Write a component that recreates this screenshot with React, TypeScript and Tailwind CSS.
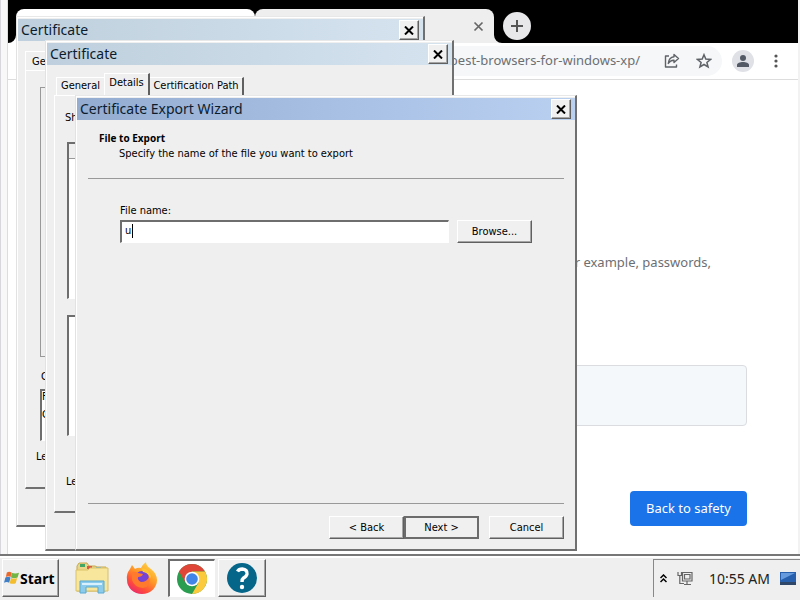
import React from "react";

const raised = "border border-t-white border-l-white border-r-[#606060] border-b-[#606060] shadow-[inset_-1px_-1px_0_#a5a5a5]";
const sunken = "border-t-2 border-l-2 border-t-[#6e6e6e] border-l-[#6e6e6e] border-b border-r border-b-white border-r-white";
const tahoma = "font-['DejaVu_Sans_Condensed','DejaVu_Sans',sans-serif] text-[11px] leading-4";

function CloseButton() {
  return (
    <button aria-label="Close" className={`flex h-5 w-5 items-center justify-center bg-[#f0f0f0] ${raised}`}>
      <svg width="10" height="9" viewBox="0 0 10 9" stroke="#000" strokeWidth="2">
        <path d="M1 0.5 9 8.5M9 0.5 1 8.5" />
      </svg>
    </button>
  );
}

function Window({ title, place, bar, children }: { title: string; place: string; bar: string; children: React.ReactNode }) {
  return (
    <section aria-label={title} className={`absolute flex flex-col overflow-hidden border-l border-t border-r-2 border-b-2 border-l-[#e2e2e2] border-t-[#e8e8e8] border-r-[#707070] border-b-[#707070] bg-[#efefef] ${place}`}>
      <div className="flex grow flex-col border-l border-t border-white">
        <header className={`mt-px flex h-[22px] shrink-0 items-center justify-between pl-[3px] pr-1 ${bar}`}>
          <h2 className="font-['Noto_Sans','Open_Sans',sans-serif] text-[14px] leading-5 text-[#0c1c2e]">{title}</h2>
          <CloseButton />
        </header>
        {children}
      </div>
    </section>
  );
}

const paleBar = "bg-linear-to-r from-[#bfcfdd] via-[#c9dae6] to-[#d5e3ef]";
const blueBar = "bg-linear-to-r from-[#94acd0] via-[#a6bfe3] to-[#bad0f1]";

function StatusCertificate() {
  return (
    <Window title="Certificate" place="left-4 top-4 h-[511px] w-[409px]" bar={paleBar}>
      <div className={`flex grow flex-col pl-[7px] pr-2 pb-9 pt-2.5 ${tahoma}`}>
        <button className="w-[46px] border-l border-t border-white pl-1.5 pt-0.5 text-left">Ge</button>
        <div className="flex grow flex-col border-b-2 border-l border-t border-b-[#707070] border-l-white border-t-white pl-3.5 pt-4">
          <div className="h-[270px] border border-[#999]" />
          <p className="mt-3 pl-px">C</p>
          <div className={`mt-1 h-[52px] bg-white ${sunken}`}>
            <p className="leading-3">F</p>
            <p className="mt-1">C</p>
          </div>
          <p className="-ml-1 mt-2">Le</p>
        </div>
      </div>
    </Window>
  );
}

function DetailsCertificate() {
  return (
    <Window title="Certificate" place="left-[45px] top-10 h-[511px] w-[409px]" bar={paleBar}>
      <div className={`flex grow flex-col pb-9 pl-[7px] pr-2 pt-2 ${tahoma}`}>
        <div role="tablist" className="flex items-end pl-0.5">
          <button role="tab" className="h-[18px] w-12 border-l border-t border-white pb-0.5 text-center">General</button>
          <button role="tab" aria-selected="true" className="h-[22px] w-[46px] border-l border-r-2 border-t border-l-white border-r-[#606060] border-t-white pb-1">Details</button>
          <button role="tab" className="h-[18px] w-[94px] border-r-2 border-t border-r-[#606060] border-t-white pb-0.5 text-center">Certification Path</button>
        </div>
        <div className="flex grow flex-col border-b-2 border-l border-t border-b-[#707070] border-l-white border-t-white pl-3 pt-3.5">
          <p className="-ml-0.5">Sh</p>
          <div className={`mt-4 h-[157px] bg-white ${sunken}`}>
            <div className="h-[15px] border-b border-[#999] bg-[#efefef]" />
          </div>
          <div className={`mt-4 h-[121px] bg-white ${sunken}`} />
          <p className="-ml-px mt-[38px]">Le</p>
        </div>
      </div>
    </Window>
  );
}

function ExportWizard() {
  const button = `h-[23px] w-[75px] bg-[#f0f0f0] ${raised}`;
  return (
    <Window title="Certificate Export Wizard" place="left-[75px] top-[95px] h-[456px] w-[502px]" bar={blueBar}>
      <div className={`flex grow flex-col pb-2.5 pl-[11px] pr-[11px] text-black ${tahoma}`}>
        <div className="border-b border-[#999] pb-4 pl-[11px] pt-2.5">
          <h3 className="font-['Open_Sans','Noto_Sans',sans-serif] text-[10px] font-bold">File to Export</h3>
          <p className="pl-5">Specify the name of the file you want to export</p>
        </div>
        <form className="flex grow flex-col px-8 pt-6" onSubmit={(e) => e.preventDefault()}>
          <label htmlFor="file">File name:</label>
          <div className="flex items-center gap-2 pt-px">
            <div className="relative flex min-w-0 grow">
              <input id="file" defaultValue="u" className={`h-[23px] w-full bg-white pb-1 pl-[3px] outline-none ${sunken}`} />
              <span className="absolute left-3 top-1 h-3.5 w-px bg-black" />
            </div>
            <button className={button}>Browse...</button>
          </div>
        </form>
        <footer className="flex justify-end border-t border-[#999] pt-3">
          <button className={button}>&lt; Back</button>
          <button className="h-[23px] w-[75px] border-2 border-[#6c6c6c] bg-[#f0f0f0]">Next &gt;</button>
          <button className={`ml-2.5 ${button}`}>Cancel</button>
        </footer>
      </div>
    </Window>
  );
}

function Browser() {
  return (
    <div className="flex grow border-l border-[#d8d8dc]">
      <div className="w-[7px] border-r border-[#ddd] bg-[#f8f8f9]" />
      <div className="flex grow flex-col bg-white">
        <div className="flex h-[43px] items-end bg-black">
          <svg width="8" height="8" viewBox="0 0 8 8"><path d="M8 0A8 8 0 0 1 0 8H8Z" fill="#fff" /></svg>
          <div className="h-[34px] w-[239px] rounded-t-lg bg-white" />
          <div className="flex h-[34px] w-[239px] items-center justify-end rounded-t-lg bg-[#eee] pr-2.5">
            <button aria-label="Close tab">
              <svg width="11" height="11" viewBox="0 0 11 11" stroke="#666" strokeWidth="1.7"><path d="M1.5 1.5 9.5 9.5M9.5 1.5 1.5 9.5" /></svg>
            </button>
          </div>
          <svg width="8" height="8" viewBox="0 0 8 8"><path d="M0 0A8 8 0 0 0 8 8H0Z" fill="#eee" /></svg>
          <button aria-label="New tab" className="mb-[3px] ml-px flex h-7 w-7 items-center justify-center rounded-full bg-[#e8e8eb]">
            <svg width="14" height="14" viewBox="0 0 14 14" stroke="#555" strokeWidth="2"><path d="M7 1V13M1 7H13" /></svg>
          </button>
        </div>
        <div className="flex h-[37px] items-center border-b border-[#ddd] pr-5">
          <div className="ml-10 flex h-[30px] grow items-center justify-end rounded-full bg-[#f5f7f8] pr-2.5">
            <span className="font-['Noto_Sans','Open_Sans',sans-serif] text-[13px] text-[#6c6f73]">best-browsers-for-windows-xp/</span>
            <button aria-label="Share" className="ml-6">
              <svg width="16" height="16" viewBox="0 0 16 16" fill="none" stroke="#5f6368" strokeWidth="1.4" strokeLinejoin="round"><path d="M5 3H1.5V14H12.5V11.5M10 1.5 14.5 5.5 10 9.5V7.3C7 7.1 5.5 8.5 4.3 10.5 4.6 6.8 6.5 4.2 10 3.8Z" /></svg>
            </button>
            <button aria-label="Bookmark" className="ml-4">
              <svg width="16" height="16" viewBox="0 0 16 16" fill="none" stroke="#5f6368" strokeWidth="1.5"><path d="M8 1.7 9.8 6 14.5 6.4 10.9 9.4 12.1 14 8 11.5 3.9 14 5.1 9.4 1.5 6.4 6.2 6Z" /></svg>
            </button>
          </div>
          <button aria-label="Profile" className="ml-2.5 flex h-[22px] w-[22px] items-center justify-center rounded-full bg-[#dfe1e7]">
            <svg width="12" height="12" viewBox="0 0 12 12" fill="#535a66"><circle cx="6" cy="3" r="3" /><path d="M0 12V10C0 8 3 7 6 7S12 8 12 10V12Z" /></svg>
          </button>
          <button aria-label="Menu" className="ml-5">
            <svg width="4" height="14" viewBox="0 0 4 14" fill="#555"><circle cx="2" cy="2" r="1.6" /><circle cx="2" cy="7" r="1.6" /><circle cx="2" cy="12" r="1.6" /></svg>
          </button>
        </div>
        <main className="flex grow flex-col pl-12 pr-[51px] pt-[170px] font-['Noto_Sans','Open_Sans',sans-serif]">
          <p className="pr-9 text-right text-[13px] leading-6 text-[#6c6f73]">r example, passwords,</p>
          <div className="mt-[91px] h-[61px] rounded border border-[#dadce0] bg-[#f5f8fa]" />
          <button className="mt-[65px] h-[35px] w-[117px] self-end rounded bg-[#1a73e8] text-[13px] text-white">Back to safety</button>
        </main>
      </div>
      <div className="w-0.5 bg-[#f2f2f2]" />
    </div>
  );
}

function FlagIcon() {
  return (
    <svg width="15" height="16" viewBox="0 0 16 16">
      <path d="M3 2C5 1 6 1 8 2L7 7C5 6 4 6 2 7Z" fill="#e9682c" />
      <path d="M8 2.5C11 3.5 13 3.5 16 2.5L14.5 7.5C12 8.5 10 8.5 7.5 7.5Z" fill="#73b544" />
      <path d="M1.5 7.5C3.5 6.5 5 6.5 7 7.5L5.5 13C4 12 2 12 0 13Z" fill="#3e7fc8" />
      <path d="M7.5 8C10 9 12 9 14 8L12.5 13.5C10.5 14.5 8.5 14.5 6 13.5Z" fill="#f3bd2e" />
    </svg>
  );
}

function FolderIcon() {
  return (
    <svg width="34" height="32" viewBox="0 0 34 32">
      <path d="M2 4 4 1H12L14 4H20L22 5H31V29H2Z" fill="#ead58a" stroke="#c7a950" />
      <path d="M5 2H10V5H5Z" fill="#43a667" /><path d="M12 4H17V7H12Z" fill="#d85b43" /><path d="M21 5H26V8H21Z" fill="#6db0d8" />
      <path d="M1 8H13L15 6H33V29H1Z" fill="#f7e69b" stroke="#dac169" />
      <path d="M5 19H29V31H23V25H11V31H5Z" fill="#8dcbec" stroke="#5ba9d2" />
      <path d="M7 22H27" stroke="#d8f1fc" strokeWidth="2" />
    </svg>
  );
}

function FirefoxIcon() {
  return (
    <svg width="32" height="32" viewBox="0 0 32 32">
      <defs>
        <linearGradient id="fox" x1="0.85" y1="0" x2="0.2" y2="1"><stop stopColor="#ffe04a" /><stop offset=".45" stopColor="#ff9526" /><stop offset=".75" stopColor="#ff4b3c" /><stop offset="1" stopColor="#e42475" /></linearGradient>
      </defs>
      <path d="M4 7 6 3 9 7Q12 5 15 6 16 3 20 0 20 4 25 7 31 12 31 18A15 14 0 0 1 1 18Q0 12 4 7Z" fill="url(#fox)" />
      <circle cx="16" cy="16" r="7" fill="#7643d6" />
      <path d="M6 10Q9 9 12 11L17 12Q16 15 12 15 11 18 15 20 21 20 23 15 26 24 17 26 8 25 6 18Z" fill="#ff7a2c" />
      <path d="M15 6Q24 6 25 16 21 10 17 10Z" fill="#ffc431" />
    </svg>
  );
}

function ChromeIcon() {
  return (
    <svg width="32" height="32" viewBox="0 0 32 32">
      <circle cx="16" cy="16" r="15" fill="#2a9d50" />
      <path d="M16 16 3 8.5A15 15 0 0 1 29 8.5H16Z" fill="#df4638" />
      <path d="M16 8.5H29A15 15 0 0 1 16 31L22.5 19.7Z" fill="#fbcb3d" />
      <path d="M3 8.5 9.5 19.7 16 16 16 8.5Z" fill="#df4638" />
      <circle cx="16" cy="16" r="7.3" fill="#fff" /><circle cx="16" cy="16" r="5.8" fill="#4285e8" />
    </svg>
  );
}

function Taskbar() {
  return (
    <footer className="relative flex h-[46px] shrink-0 items-center border-t-2 border-[#777] bg-[#efefef] pl-0.5 shadow-[inset_0_2px_0_#fff]">
      <button className={`flex h-[38px] w-[57px] items-center gap-px pl-px text-[14px] font-bold text-black ${raised}`}><FlagIcon />Start</button>
      <button aria-label="File explorer" className="ml-4"><FolderIcon /></button>
      <button aria-label="Firefox" className="ml-[17px]"><FirefoxIcon /></button>
      <button aria-label="Chrome" className={`ml-2.5 flex h-[38px] w-[47px] items-center justify-center bg-white ${sunken}`}><ChromeIcon /></button>
      <button aria-label="Help" className={`ml-[3px] flex h-[38px] w-12 items-center justify-center ${raised}`}>
        <svg width="30" height="30" viewBox="0 0 30 30"><circle cx="15" cy="15" r="15" fill="#05668a" /><path d="M10.5 8.5Q12 6 15.3 6 20.5 6.5 20 11 19.5 13.5 16.5 15 15 16 15 19" fill="none" stroke="#fff" strokeWidth="3.4" /><circle cx="15" cy="24" r="2.2" fill="#fff" /></svg>
      </button>
      <div className="ml-auto flex h-[38px] items-center border-l border-t border-[#888] pl-1.5 pr-1">
        <svg width="7" height="9" viewBox="0 0 7 9" fill="none" stroke="#000" strokeWidth="1.5"><path d="M.5 4 3.5 1 6.5 4M.5 8 3.5 5 6.5 8" /></svg>
        <svg className="ml-2.5" width="16" height="15" viewBox="0 0 16 15" fill="none" stroke="#666" strokeWidth="1.2"><path d="M5.5 1.5H15V10H5.5ZM7.5 3.5H13V8H7.5ZM10 10V13M7 13.5H14M1 1V4.5H4.5V1M2.8 4.5V12.5H7" /></svg>
        <time className="ml-4 text-[14px] text-[#222]">10:55 AM</time>
        <svg className="ml-2.5" width="16" height="13" viewBox="0 0 16 13"><path d="M0 0H16V10H0Z" fill="#2860ad" /><path d="M1 1H15L1 8Z" fill="#679bdd" /><path d="M0 10H16V13H0Z" fill="#2f4869" /></svg>
      </div>
    </footer>
  );
}

export default function App() {
  return (
    <div className="relative flex min-h-screen flex-col overflow-hidden bg-white font-['Noto_Sans','Open_Sans',sans-serif]">
      <Browser />
      <StatusCertificate />
      <DetailsCertificate />
      <ExportWizard />
      <Taskbar />
    </div>
  );
}
